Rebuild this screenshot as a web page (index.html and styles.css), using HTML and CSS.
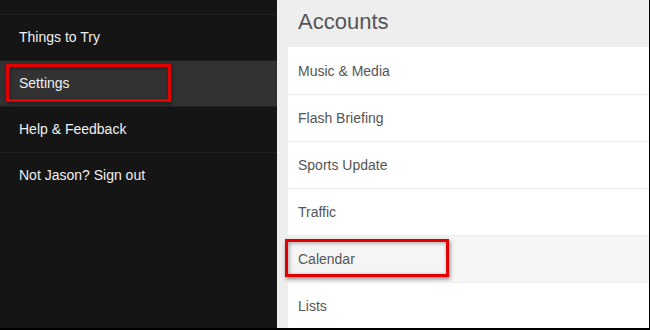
FILE: index.html
```html
<!DOCTYPE html>
<html lang="en">
<head>
  <meta charset="UTF-8" />
  <title>Settings – Accounts</title>
  <link rel="stylesheet" href="styles.css">
</head>
<body>
  <div class="app">

    <!-- Side menu -->
    <nav class="menu">
      <div class="menu-item">Things to Try</div>
      <div class="menu-item active">
        Settings
        <span class="callout callout-menu"></span>
      </div>
      <div class="menu-item">Help &amp; Feedback</div>
      <div class="menu-item">Not Jason? Sign out</div>
    </nav>

    <!-- Accounts list -->
    <main class="content">
      <h1 class="section-title">Accounts</h1>
      <ul class="list">
        <li class="list-item">Music &amp; Media</li>
        <li class="list-item">Flash Briefing</li>
        <li class="list-item">Sports Update</li>
        <li class="list-item">Traffic</li>
        <li class="list-item active">
          Calendar
          <span class="callout callout-list"></span>
        </li>
        <li class="list-item">Lists</li>
      </ul>
    </main>

  </div>
</body>
</html>
```

FILE: styles.css
```css
:root {
  --menu-bg: #151515;
  --menu-active: #323232;
  --menu-line: #202020;
  --menu-text: #f0f0f0;
  --panel-bg: #eeeeee;
  --row-bg: #ffffff;
  --row-active: #f5f5f5;
  --row-line: #ececec;
  --text: #555555;
  --callout: #e20000;
}

* {
  box-sizing: border-box;
  margin: 0;
  padding: 0;
}

body {
  background: #000;
  font-family: 'Liberation Sans', Arial, sans-serif;
  overflow: hidden;
}

.app {
  display: flex;
  width: 649px;
  height: 328px;
  overflow: hidden;
}

/* Side menu */
.menu {
  width: 277px;
  flex-shrink: 0;
  background: var(--menu-bg);
  padding-top: 14px;
}

.menu-item {
  position: relative;
  height: 46px;
  padding: 0 0 1px 19px;
  display: flex;
  align-items: center;
  border-top: 1px solid var(--menu-line);
  color: var(--menu-text);
  font-size: 14px;
}

.menu-item.active {
  background: var(--menu-active);
}

/* Accounts list */
.content {
  flex: 1;
  background: var(--panel-bg);
}

.section-title {
  height: 47px;
  padding: 9px 0 0 21px;
  font-size: 22px;
  font-weight: normal;
  color: var(--text);
}

.list {
  list-style: none;
  margin-left: 11px;
  background: var(--row-bg);
}

.list-item {
  position: relative;
  height: 47px;
  padding-left: 10px;
  display: flex;
  align-items: center;
  border-top: 1px solid var(--row-line);
  color: var(--text);
  font-size: 14px;
}

.list-item:first-child {
  border-top: none;
}

.list-item.active {
  background: var(--row-active);
}

/* Red annotation boxes */
.callout {
  position: absolute;
  border: 3px solid var(--callout);
  box-shadow: 1px 2px 4px rgba(0, 0, 0, 0.45), inset 1px 1px 4px rgba(0, 0, 0, 0.35);
}

.callout-menu {
  left: 6px;
  top: 3px;
  width: 165px;
  height: 38px;
}

.callout-list {
  left: -3px;
  top: 3px;
  width: 164px;
  height: 38px;
}
```
